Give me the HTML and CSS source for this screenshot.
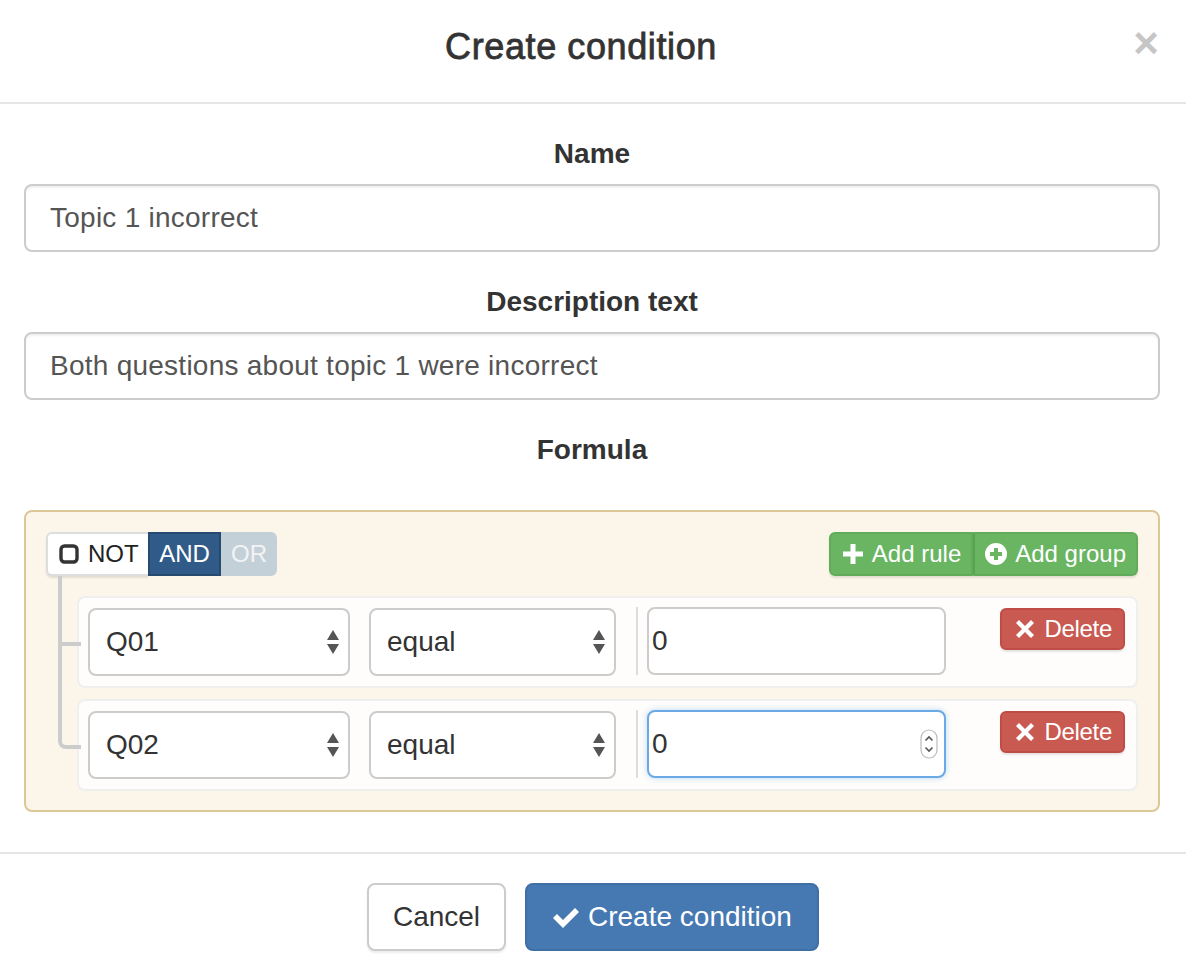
FILE: index.html
```html
<!DOCTYPE html>
<html>
<head>
<meta charset="utf-8">
<link rel="stylesheet" href="styles.css">
</head>
<body>
<div class="modal">
  <div class="modal-header">
    <h4 class="modal-title">Create condition</h4>
    <span class="close">×</span>
  </div>
  <div class="modal-body">
    <div class="form-group">
      <label class="label">Name</label>
      <div class="form-control">Topic 1 incorrect</div>
    </div>
    <div class="form-group">
      <label class="label">Description text</label>
      <div class="form-control">Both questions about topic 1 were incorrect</div>
    </div>
    <label class="label formula-label">Formula</label>
    <div class="qb-group">
      <div class="qb-header">
        <div class="btn-group">
          <span class="tbtn tbtn-not">
            <svg class="ico-check" width="20" height="20" viewBox="0 0 20 20"><rect x="2" y="2" width="16" height="16" rx="3.5" fill="none" stroke="#333" stroke-width="3.4"/></svg>
            NOT
          </span>
          <span class="tbtn tbtn-and">AND</span>
          <span class="tbtn tbtn-or">OR</span>
        </div>
        <div class="btn-group add-group">
          <span class="gbtn">
            <svg width="20" height="20" viewBox="0 0 20 20"><path d="M7.5 0h5v7.5H20v5h-7.5V20h-5v-7.5H0v-5h7.5z" fill="#fff"/></svg>
            Add rule
          </span>
          <span class="gbtn gbtn-last">
            <svg width="22" height="22" viewBox="0 0 22 22"><circle cx="11" cy="11" r="11" fill="#fff"/><path d="M9 5h4v4h4v4h-4v4H9v-4H5V9h4z" fill="#69b562"/></svg>
            Add group
          </span>
        </div>
      </div>
      <div class="rules-list">
        <div class="rule">
          <div class="select sel-field"><span>Q01</span><svg width="14" height="26" viewBox="0 0 14 26"><path d="M7 1L13 11H1z M7 25L1 15h12z" fill="#555"/></svg></div>
          <div class="select sel-op"><span>equal</span><svg width="14" height="26" viewBox="0 0 14 26"><path d="M7 1L13 11H1z M7 25L1 15h12z" fill="#555"/></svg></div>
          <div class="value-container">
            <div class="value-input">0</div>
          </div>
          <span class="del-btn">
            <svg width="20" height="20" viewBox="0 0 20 20"><path d="M4 1l6 6 6-6 3 3-6 6 6 6-3 3-6-6-6 6-3-3 6-6-6-6z" fill="#fff"/></svg>
            Delete
          </span>
        </div>
        <div class="rule rule-last">
          <div class="select sel-field"><span>Q02</span><svg width="14" height="26" viewBox="0 0 14 26"><path d="M7 1L13 11H1z M7 25L1 15h12z" fill="#555"/></svg></div>
          <div class="select sel-op"><span>equal</span><svg width="14" height="26" viewBox="0 0 14 26"><path d="M7 1L13 11H1z M7 25L1 15h12z" fill="#555"/></svg></div>
          <div class="value-container">
            <div class="value-input focused"><span>0</span>
              <svg class="spin" width="18" height="30" viewBox="0 0 18 30"><rect x="1" y="1" width="16" height="28" rx="8" fill="#fff" stroke="#bbb" stroke-width="1.2"/><path d="M5.5 11.5L9 8l3.5 3.5M5.5 18.5L9 22l3.5-3.5" fill="none" stroke="#555" stroke-width="1.6"/></svg>
            </div>
          </div>
          <span class="del-btn">
            <svg width="20" height="20" viewBox="0 0 20 20"><path d="M4 1l6 6 6-6 3 3-6 6 6 6-3 3-6-6-6 6-3-3 6-6-6-6z" fill="#fff"/></svg>
            Delete
          </span>
        </div>
      </div>
    </div>
  </div>
  <div class="modal-footer">
    <span class="btn btn-default">Cancel</span>
    <span class="btn btn-primary">
      <svg width="28" height="24" viewBox="0 0 28 24"><path d="M1 13l4-4 6 6L23 3l4 4L11 23z" fill="#fff"/></svg>
      Create condition
    </span>
  </div>
</div>
</body>
</html>
```

FILE: styles.css
```css
* { box-sizing: border-box; }
html, body { margin: 0; padding: 0; background: #fff; }
body {
  font-family: "Liberation Sans", Arial, Helvetica, sans-serif;
  font-size: 28px;
  line-height: 40px;
  color: #333;
}
.modal { width: 1186px; height: 980px; display: flex; flex-direction: column; }

.modal-header {
  position: relative;
  padding: 21px 54px 30px 30px;
  border-bottom: 2px solid #e5e5e5;
}
.modal-title {
  margin: 0;
  text-align: center;
  font-size: 36px;
  line-height: 51px;
  font-weight: normal;
  letter-spacing: 0.6px;
  -webkit-text-stroke: 0.8px #333;
  color: #333;
}
.close {
  position: absolute;
  right: 27px;
  top: 19px;
  font-size: 44px;
  line-height: 48px;
  font-weight: bold;
  color: #c6c6c6;
}

.modal-body { padding: 30px 26px 40px 24px; }
.form-group { display: flex; flex-direction: column; margin-bottom: 30px; }
.label {
  display: block;
  text-align: center;
  font-weight: bold;
  margin-bottom: 10px;
}
.formula-label { margin-bottom: 40px; }
.form-control {
  height: 68px;
  padding: 12px 24px;
  border: 2px solid #ccc;
  border-radius: 8px;
  color: #555;
  background: #fff;
  letter-spacing: 0.25px;
  box-shadow: inset 0 2px 2px rgba(0,0,0,.06);
}

.qb-group {
  border: 2px solid #dcc896;
  border-radius: 8px;
  background: #fbf6e9;
  padding: 20px 20px 19px 20px;
}
.qb-header { display: flex; justify-content: space-between; align-items: flex-start; }
.btn-group { display: flex; height: 44px; }
.tbtn {
  display: flex;
  align-items: center;
  font-size: 24px;
  height: 44px;
}
.tbtn-not {
  width: 102px;
  padding-left: 11px;
  gap: 9px;
  background: #fff;
  color: #222;
  border: 2px solid #ddd;
  border-right: none;
  border-radius: 6px 0 0 6px;
  box-shadow: 0 2px 2px rgba(0,0,0,.1);
}
.tbtn-and {
  width: 73px;
  justify-content: center;
  background: #305b88;
  border: 2px solid #264a70;
  color: #fff;
}
.tbtn-or {
  width: 56px;
  justify-content: center;
  background: #c4d0d8;
  color: #f3f3f3;
  border-radius: 0 6px 6px 0;
}
.add-group { border-radius: 6px; box-shadow: 0 2px 2px rgba(0,0,0,.1); }
.gbtn {
  display: flex;
  align-items: center;
  gap: 9px;
  height: 44px;
  padding: 0 10px 0 12px;
  background: #69b562;
  color: #fff;
  font-size: 24px;
  border: 2px solid #62ab5b;
  border-radius: 6px 0 0 6px;
}
.gbtn-last {
  border-left: 2px solid #5aa153;
  border-radius: 0 6px 6px 0;
  padding: 0 10px 0 10px;
  gap: 8px;
}

.rules-list {
  margin-top: 20px;
  padding-left: 31px;
  display: flex;
  flex-direction: column;
  gap: 11px;
}
.rule {
  position: relative;
  display: flex;
  align-items: flex-start;
  background: #fefdfb;
  border: 2px solid #efefef;
  border-radius: 8px;
  padding: 10px 10px 10px 9px;
}
.rule::before {
  content: "";
  position: absolute;
  left: -21px;
  top: -13px;
  width: 19px;
  height: calc(50% + 13px);
  border-left: 4px solid #ccc;
  border-bottom: 4px solid #ccc;
}
.rule:first-child::before { top: -22px; height: calc(50% + 22px); }
.rule::after {
  content: "";
  position: absolute;
  left: -21px;
  top: 50%;
  height: calc(50% + 13px);
  border-left: 4px solid #ccc;
}
.rule-last::after { display: none; }
.rule-last::before { border-bottom-left-radius: 8px; }

.select {
  height: 68px;
  border: 2px solid #ccc;
  border-radius: 8px;
  background: #fff;
  display: flex;
  align-items: center;
  justify-content: space-between;
  padding: 0 8px 0 16px;
  color: #333;
}
.sel-field { width: 262px; margin-right: 19px; }
.sel-op { width: 247px; margin-right: 20px; padding-left: 16px; }

.value-container {
  border-left: 2px solid #ddd;
  padding-left: 9px;
  margin-top: -1px;
}
.value-input {
  width: 299px;
  height: 68px;
  border: 2px solid #ccc;
  border-radius: 8px;
  background: #fff;
  padding: 0 3px;
  display: flex;
  align-items: center;
  justify-content: space-between;
  color: #333;
}
.value-input.focused {
  border-color: #6aa8e6;
  box-shadow: 0 0 6px rgba(102,175,233,.45);
  padding-right: 6px;
}
.del-btn {
  margin-left: auto;
  margin-right: 1px;
  display: flex;
  align-items: center;
  gap: 9px;
  height: 42px;
  padding: 0 11px 0 13px;
  background: #c95a52;
  border: 2px solid #bf4d45;
  border-radius: 6px;
  color: #fff;
  font-size: 24px;
  letter-spacing: -0.3px;
  box-shadow: 0 2px 2px rgba(0,0,0,.1);
}

.modal-footer {
  border-top: 2px solid #e5e5e5;
  padding: 29px 30px 30px;
  display: flex;
  justify-content: center;
  gap: 19px;
  margin-top: auto;
}
.btn {
  display: flex;
  align-items: center;
  height: 68px;
  border-radius: 8px;
  padding: 0 24px;
  font-size: 28px;
}
.btn-default {
  width: 139px;
  justify-content: center;
  background: #fff;
  border: 2px solid #ccc;
  color: #333;
  box-shadow: 0 2px 2px rgba(0,0,0,.08);
}
.btn-primary {
  width: 294px;
  gap: 8px;
  padding-left: 25px;
  background: #4679b2;
  border: 2px solid #3f6fa4;
  color: #fff;
}
```
